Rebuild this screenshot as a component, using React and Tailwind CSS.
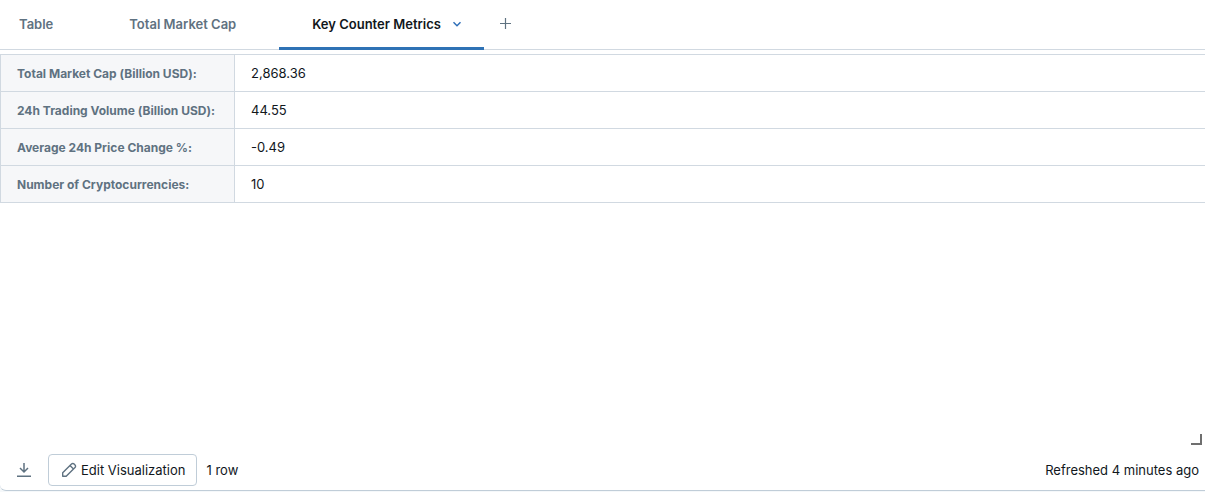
const metrics = [
  ["Total Market Cap (Billion USD):", "2,868.36"],
  ["24h Trading Volume (Billion USD):", "44.55"],
  ["Average 24h Price Change %:", "-0.49"],
  ["Number of Cryptocurrencies:", "10"],
];

function ChevronIcon() {
  return (
    <svg width="10" height="10" viewBox="0 0 10 10" fill="none" stroke="#2f6fb8" strokeWidth="1.5" aria-hidden="true">
      <path d="M1.5 3.2 5 6.7l3.5-3.5" />
    </svg>
  );
}

function PlusIcon() {
  return (
    <svg width="11" height="11" viewBox="0 0 11 11" fill="none" stroke="#5f7281" strokeWidth="1.2" aria-hidden="true">
      <path d="M5.5 0v11M0 5.5h11" />
    </svg>
  );
}

function DownloadIcon() {
  return (
    <svg width="16" height="16" viewBox="0 0 16 16" fill="none" stroke="#5f7281" strokeWidth="1.5" aria-hidden="true">
      <path d="M8 1v8.5M4 6l4 4 4-4M1 14.25h14" />
    </svg>
  );
}

function PencilIcon() {
  return (
    <svg width="16" height="16" viewBox="0 0 16 16" fill="none" stroke="#5f7281" strokeWidth="1.4" strokeLinejoin="round" aria-hidden="true">
      <path d="M1.7 14.3v-3.5l8.8-8.8a1.8 1.8 0 0 1 2.6 0l.9.9a1.8 1.8 0 0 1 0 2.6L5.2 14.3zM9 3.5 12.5 7" />
    </svg>
  );
}

function ResizeIcon() {
  return (
    <svg width="11" height="11" viewBox="0 0 11 11" fill="none" stroke="#6f6f6f" strokeWidth="2" aria-hidden="true">
      <path d="M10 0v10H0" />
    </svg>
  );
}

export default function App() {
  return (
    <div className="min-h-screen bg-[#f5f8fa] pb-px font-['Inter',sans-serif] text-[13px] leading-5 text-[#11171c] [font-feature-settings:'calt'_0]">
      <main className="flex min-h-[calc(100vh-1px)] flex-col rounded-bl-md border-b border-[#c0cdd8] bg-white">
        <nav className="flex h-[50px] border-b border-[#d1d9e1] font-semibold text-[#5f7281]">
          <button type="button" className="pb-px pl-[19px] pr-[38px]">Table</button>
          <button type="button" className="px-[38px] pb-px">Total Market Cap</button>
          <button
            type="button"
            aria-current="page"
            className="-mb-px ml-[5px] flex w-[205px] items-center gap-[11px] border-b-3 border-[#2f72b5] pl-[33px] pt-px text-[#11171c]"
          >
            Key Counter Metrics
            <ChevronIcon />
          </button>
          <button type="button" aria-label="Add visualization" className="px-4 pb-[2px]">
            <PlusIcon />
          </button>
        </nav>

        <table className="mt-1 w-full border-collapse border-y border-l border-[#d1d9e1]">
          <tbody>
            {metrics.map(([label, value]) => (
              <tr key={label} className="h-[37px] border-b border-[#d1d9e1]">
                <th scope="row" className="w-[234px] whitespace-nowrap border-r border-[#d1d9e1] bg-[#f6f7f9] pl-4 pt-px text-left text-xs font-bold text-[#5f7281]">
                  {label}
                </th>
                <td className="px-4">{value}</td>
              </tr>
            ))}
          </tbody>
        </table>

        <div className="mt-auto flex justify-end pb-[9px] pr-[3px]">
          <ResizeIcon />
        </div>
        <footer className="flex items-center pb-1 pl-4 pr-[6px]">
          <button type="button" aria-label="Download">
            <DownloadIcon />
          </button>
          <button type="button" className="ml-4 flex h-8 items-center gap-1 rounded border border-[#c0cdd8] pl-3 pr-[11px]">
            <PencilIcon />
            Edit Visualization
          </button>
          <span className="ml-[9px]">1 row</span>
          <span className="ml-auto">Refreshed 4 minutes ago</span>
        </footer>
      </main>
    </div>
  );
}
